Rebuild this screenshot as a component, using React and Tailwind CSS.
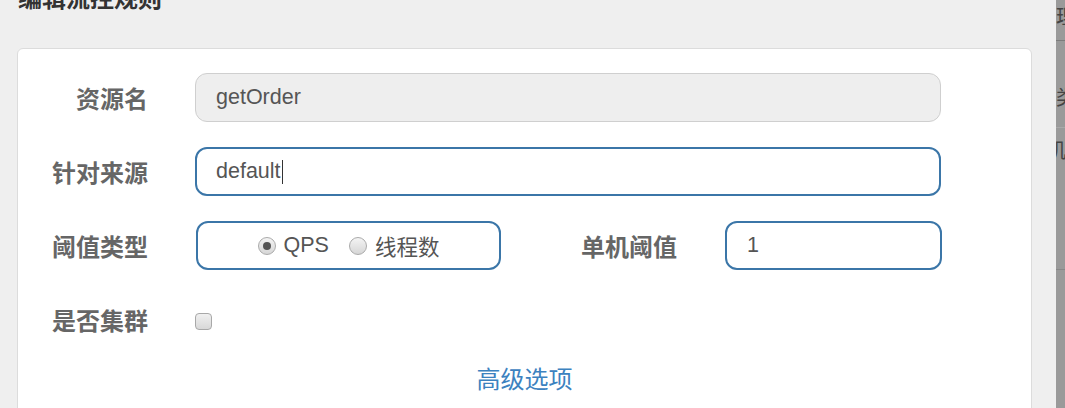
import React from "react";

const cjk = { fontFamily: '"Noto Sans CJK SC", "Noto Sans", sans-serif' };
const latin = { fontFamily: '"Liberation Sans", "Noto Sans CJK SC", sans-serif' };

function Label({ children, className = "" }) {
  return (
    <div
      className={`w-[130px] shrink-0 text-right text-[24px] font-bold leading-none text-[#666] ${className}`}
      style={cjk}
    >
      {children}
    </div>
  );
}

function Radio({ checked, label, font }) {
  return (
    <label className="flex items-center gap-[8px]">
      <span className="flex h-[18px] w-[18px] items-center justify-center rounded-full border border-[#aaa] bg-gradient-to-b from-[#f4f4f4] to-[#d6d6d6]">
        {checked && <span className="h-[8px] w-[8px] rounded-full bg-[#555]" />}
      </span>
      <span className="text-[21.5px] leading-none text-[#555]" style={font}>
        {label}
      </span>
    </label>
  );
}

function SideStrip() {
  return (
    <div className="relative flex w-[9px] shrink-0 flex-col overflow-hidden bg-[#9a9a9a] text-[20px] leading-none text-[#444]" style={cjk}>
      <div className="h-[41px] border-b border-[#7c7c7c] pt-[6px]">理</div>
      <div className="h-[87px] border-b border-[#a9a9a9] pt-[46px]">类</div>
      <div className="h-[142px] border-b border-[#888] pt-[12px]">
        <span className="ml-[-10px]">机</span>
      </div>
      <div className="flex-1" />
    </div>
  );
}

export default function App() {
  return (
    <div className="flex h-[408px] w-[1065px] overflow-hidden bg-[#efefef]">
      <div className="flex-1">
        <div className="ml-[18px] mt-[-15px] text-[24px] font-bold leading-none text-[#333]" style={cjk}>
          编辑流控规则
        </div>
        <div className="ml-[17px] mt-[39px] h-[400px] w-[1015px] rounded-[6px] border border-[#dcdcdc] bg-white pt-[24px]">
          {/* 资源名 */}
          <div className="flex items-center">
            <Label>资源名</Label>
            <div
              className="ml-[47px] flex h-[49px] w-[746px] items-center rounded-[12px] border border-[#cfcfcf] bg-[#eeeeee] pl-[20px] text-[21.5px] text-[#555]"
              style={latin}
            >
              getOrder
            </div>
          </div>

          {/* 针对来源 */}
          <div className="mt-[25px] flex items-center">
            <Label>针对来源</Label>
            <div
              className="ml-[47px] flex h-[49px] w-[746px] items-center rounded-[12px] border-2 border-[#3b76a8] bg-white pl-[19px] text-[21.5px] text-[#555]"
              style={latin}
            >
              default
              <span className="ml-[1px] h-[24px] w-[1px] bg-[#333]" />
            </div>
          </div>

          {/* 阈值类型 / 单机阈值 */}
          <div className="mt-[25px] flex items-center">
            <Label>阈值类型</Label>
            <div className="ml-[48px] flex h-[49px] w-[305px] items-center justify-center gap-[20px] rounded-[12px] border-2 border-[#3b76a8] bg-white">
              <Radio checked label="QPS" font={latin} />
              <Radio label="线程数" font={cjk} />
            </div>
            <div className="ml-[80px] text-[24px] font-bold leading-none text-[#666]" style={cjk}>
              单机阈值
            </div>
            <div
              className="ml-[48px] flex h-[49px] w-[217px] items-center rounded-[12px] border-2 border-[#3b76a8] bg-white pl-[20px] text-[21.5px] text-[#555]"
              style={latin}
            >
              1
            </div>
          </div>

          {/* 是否集群 */}
          <div className="mt-[25px] flex h-[49px] items-center">
            <Label className="mt-[1px]">是否集群</Label>
            <span className="ml-[47px] mt-[3px] h-[17px] w-[17px] rounded-[4px] border border-[#a8a8a8] bg-gradient-to-b from-[#f0f0f0] to-[#d8d8d8]" />
          </div>

          <div className="mt-[22px] text-center text-[24px] leading-none text-[#3c82bf]" style={cjk}>
            高级选项
          </div>
        </div>
      </div>
      <SideStrip />
    </div>
  );
}
